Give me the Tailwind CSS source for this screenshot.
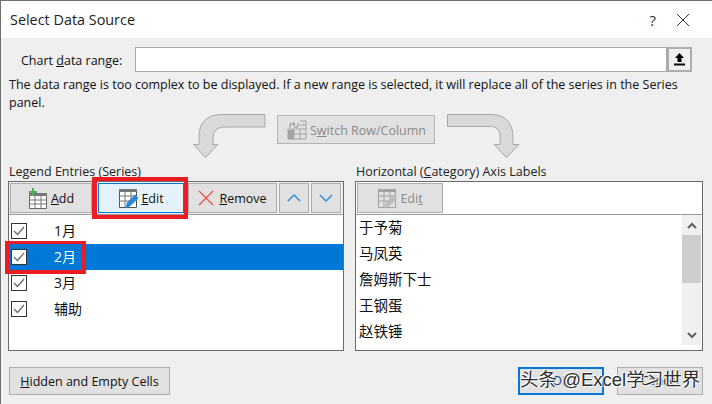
<!DOCTYPE html>
<html lang="en">
<head>
  <meta charset="UTF-8">
  <title>Select Data Source</title>
  <script src="https://cdn.jsdelivr.net/npm/@tailwindcss/browser@4"></script>
</head>
<body class="m-0 bg-[#efefef]">
  <div class="relative w-[712px] h-[404px] overflow-hidden bg-[#efefef] border-t border-l border-[#6e6e6e] text-[12.5px] leading-[18px] text-[#111] font-['Open_Sans','Noto_Sans_CJK_SC',sans-serif]">

    <!-- Title bar -->
    <div class="h-[37px] bg-white flex items-center pl-[9px] pr-[22px]">
      <span class="text-[14.4px] text-[#222]">Select Data Source</span>
      <span class="ml-auto text-[15px] text-[#333]">?</span>
      <svg class="ml-[20px] w-[14px] h-[14px]" viewBox="0 0 14 14" fill="none" stroke="#333" stroke-width="1"><path d="M1 1l12 12M13 1L1 13"/></svg>
    </div>

    <div class="pl-[7px] pr-[9px]">
      <!-- Data range -->
      <div class="flex items-center mt-[9px] h-[25px] pr-[11px]">
        <label class="w-[127px] pl-[13px] pt-[2px] shrink-0">Chart <u>d</u>ata range:</label>
        <div class="flex-1 h-full bg-white border border-[#a9a9a9]"></div>
        <div class="w-[25px] h-[25px] bg-[#f0f0f0] border-2 border-[#adadad] flex items-center justify-center">
          <svg class="w-[11px] h-[13px]" viewBox="0 0 11 13" fill="#000"><path d="M5.500 0L10 5H7.500v4h-4V5H1zM0 10.500h11V12.500H0z"/></svg>
        </div>
      </div>

      <p class="mt-[4px] pl-[1px] h-[38px] w-[690px]">The data range is too complex to be displayed. If a new range is selected, it will replace all of the series in the Series panel.</p>

      <!-- Switch row -->
      <div class="flex h-[49px]">
        <svg class="ml-[185px] w-[73px] h-[45px] shrink-0" viewBox="0 0 73 45" fill="#d9d9d9" stroke="#a8a8a8"><path d="M72 .5V13H32C24 13 20 17 20 25V30.500H25L12.500 43.500 .5 30.500H6V22C6 9 14 .5 28 .5Z"/></svg>
        <div class="ml-[11px] mt-[1px] w-[158px] h-[29px] bg-[#e1e1e1] border border-[#b5b5b5] text-[#8a8a8a] flex items-center pl-[9px] gap-[3px]">
          <svg class="w-[20px] h-[20px]" viewBox="0 0 20 20" fill="none"><path d="M1 9h18v10H1zM7 9v10M13 9v10M1 14h18M13 1h6v8M13 5h6" stroke="#a3a3a3"/><path d="M1 10h6v9H1z" fill="#a3a3a3"/><path d="M3 8V4h5M6 2l2 2-2 2M11 3v4H7" stroke="#8f8f8f"/></svg>
          <span class="pt-[2px]">S<u>w</u>itch Row/Column</span>
        </div>
        <svg class="ml-[12px] w-[73px] h-[45px] shrink-0" viewBox="0 0 73 45" fill="#d9d9d9" stroke="#a8a8a8"><path d="M.5 .5V12.500H42C49 12.500 53 15 53 22V30.500H47L59.500 43.500 72 30.500H66V24C66 8 58 .5 44 .5Z"/></svg>
      </div>

      <!-- Panels -->
      <div class="flex gap-[11px]">
        <section class="w-[336px]">
          <div class="h-[18px] pl-[1px] pt-[1px] leading-[16px] text-[#222]">Legend Entries (<u>S</u>eries)</div>
          <div class="h-[170px] bg-white border border-[#6b6b6b] flex flex-col">
            <div class="h-[33px] bg-[#efefef] border-b border-[#9a9a9a] flex items-start gap-[2px] pl-[1px] pt-[1px] shrink-0">
              <button class="w-[82px] h-[30px] bg-[#e1e1e1] border border-[#adadad] flex items-center justify-center gap-[3px]">
                <svg class="w-[20px] h-[21px]" viewBox="0 0 20 21" fill="none"><path d="M1.500 5.500h17v15h-17z" fill="#fff" stroke="#666"/><path d="M1 5h18v3H1z" fill="#777"/><path d="M7 8v12M13 8v12M1 12h18M1 16h18" stroke="#777"/><path d="M5 0v8M1 4h8" stroke="#4caf50" stroke-width="2"/></svg>
                <span class="pt-[2px]"><u>A</u>dd</span>
              </button>
              <button class="relative z-10 ml-[4px] w-[86px] h-[30px] bg-[#e5f1fb] border border-[#0078d7] flex items-center justify-center gap-[3px]">
                <svg class="w-[20px] h-[21px]" viewBox="0 0 20 21" fill="none"><path d="M1.500 1.500h17v18h-17z" fill="#fff" stroke="#555"/><path d="M1 1h18v3H1z" fill="#777"/><path d="M7 4v15M13 4v9M1 8h17M1 13h12" stroke="#777"/><path d="M7.500 20.500l1.500-6 8-8 3.500 3.500-8 8z" fill="#2b88d8"/></svg>
                <span class="pt-[2px]"><u>E</u>dit</span>
                <div class="absolute left-[-7px] top-[-7px] w-[96px] h-[42px] border-4 border-l-[5px] border-[#ed1c24]"></div>
              </button>
              <button class="ml-[2px] w-[89px] h-[30px] bg-[#e1e1e1] border border-[#adadad] flex items-center justify-center gap-[5px]">
                <svg class="w-[16px] h-[16px]" viewBox="0 0 16 16" fill="none" stroke="#e8504f" stroke-width="1.300"><path d="M1 1l14 14M15 1L1 15"/></svg>
                <span class="pt-[2px]"><u>R</u>emove</span>
              </button>
              <button class="w-[30px] h-[30px] bg-[#e1e1e1] border border-[#adadad] flex items-center justify-center">
                <svg class="w-[14px] h-[8px]" viewBox="0 0 14 8" fill="none" stroke="#3a8fd6" stroke-width="1.500"><path d="M1 7l6-6 6 6"/></svg>
              </button>
              <button class="w-[30px] h-[30px] bg-[#e1e1e1] border border-[#adadad] flex items-center justify-center">
                <svg class="w-[14px] h-[8px]" viewBox="0 0 14 8" fill="none" stroke="#3a8fd6" stroke-width="1.500"><path d="M1 1l6 6 6-6"/></svg>
              </button>
            </div>
            <ul class="pt-[3px] text-[14px]">
              <li class="h-[26px] flex items-center pl-[2px]">
                <span class="w-[16px] h-[16px] bg-white border border-[#333] flex items-center justify-center"><svg class="w-[12px] h-[10px]" viewBox="0 0 12 10" fill="none" stroke="#666" stroke-width="1.200"><path d="M1 5l3.500 3.500L11 1"/></svg></span>
                <span class="ml-[27px]">1月</span>
              </li>
              <li class="relative h-[26px] flex items-center pl-[2px] bg-[#0078d7] text-white">
                <span class="w-[16px] h-[16px] bg-white border border-[#333] flex items-center justify-center"><svg class="w-[12px] h-[10px]" viewBox="0 0 12 10" fill="none" stroke="#666" stroke-width="1.200"><path d="M1 5l3.500 3.500L11 1"/></svg></span>
                <span class="ml-[27px]">2月</span>
                <div class="absolute left-[-4px] top-[-3px] w-[81px] h-[33px] border-4 border-t-[3px] border-[#ed1c24]"></div>
              </li>
              <li class="h-[26px] flex items-center pl-[2px]">
                <span class="w-[16px] h-[16px] bg-white border border-[#333] flex items-center justify-center"><svg class="w-[12px] h-[10px]" viewBox="0 0 12 10" fill="none" stroke="#666" stroke-width="1.200"><path d="M1 5l3.500 3.500L11 1"/></svg></span>
                <span class="ml-[27px]">3月</span>
              </li>
              <li class="h-[26px] flex items-center pl-[2px]">
                <span class="w-[16px] h-[16px] bg-white border border-[#333] flex items-center justify-center"><svg class="w-[12px] h-[10px]" viewBox="0 0 12 10" fill="none" stroke="#666" stroke-width="1.200"><path d="M1 5l3.500 3.500L11 1"/></svg></span>
                <span class="ml-[27px]">辅助</span>
              </li>
            </ul>
          </div>
        </section>

        <section class="w-[348px]">
          <div class="h-[18px] pl-[1px] pt-[1px] leading-[16px] text-[#222]">Horizontal (<u>C</u>ategory) Axis Labels</div>
          <div class="h-[170px] bg-white border border-[#6b6b6b] flex flex-col">
            <div class="h-[33px] border-b border-[#9a9a9a] pl-[1px] pt-[1px] shrink-0">
              <button class="w-[86px] h-[30px] bg-[#e1e1e1] border border-[#adadad] text-[#8a8a8a] flex items-center justify-center gap-[3px]">
                <svg class="w-[20px] h-[21px]" viewBox="0 0 20 21" fill="none"><path d="M1.500 1.500h17v18h-17z" stroke="#a3a3a3"/><path d="M1 1h18v3H1z" fill="#a3a3a3"/><path d="M7 4v15M13 4v9M1 8h17M1 13h12" stroke="#a3a3a3"/><path d="M7.500 20.500l1.500-6 8-8 3.500 3.500-8 8z" fill="#bdbdbd"/></svg>
                <span class="pt-[2px]">Edi<u>t</u></span>
              </button>
            </div>
            <div class="flex flex-1 min-h-0">
              <ul class="flex-1 pl-[3px] text-[14.500px] text-[#111]">
                <li class="h-[26px] flex items-center">于予菊</li>
                <li class="h-[26px] flex items-center">马凤英</li>
                <li class="h-[26px] flex items-center">詹姆斯下士</li>
                <li class="h-[26px] flex items-center">王钢蛋</li>
                <li class="h-[26px] flex items-center">赵铁锤</li>
              </ul>
              <div class="w-[19px] h-[130px] mr-[1px] bg-[#f0f0f0] flex flex-col">
                <div class="h-[20px] flex items-center justify-center"><svg class="w-[10px] h-[7px]" viewBox="0 0 10 7" fill="none" stroke="#606060" stroke-width="2"><path d="M1 6l4-4 4 4"/></svg></div>
                <div class="h-[48px] bg-[#cdcdcd]"></div>
                <div class="mt-auto h-[20px] flex items-center justify-center"><svg class="w-[10px] h-[7px]" viewBox="0 0 10 7" fill="none" stroke="#606060" stroke-width="2"><path d="M1 1l4 4 4-4"/></svg></div>
              </div>
            </div>
          </div>
        </section>
      </div>

      <!-- Bottom buttons -->
      <div class="flex mt-[16px] pl-[1px]">
        <button class="w-[161px] h-[28px] bg-[#e1e1e1] border border-[#adadad] pt-[1px]"><u>H</u>idden and Empty Cells</button>
        <button class="ml-auto w-[86px] h-[28px] bg-[#e1e1e1] border-2 border-[#0078d7] text-[#1a3f8f]">OK</button>
        <button class="ml-[13px] w-[86px] h-[28px] bg-[#e1e1e1] border border-[#adadad]">Cancel</button>
      </div>
    </div>

    <!-- Watermark -->
    <div class="absolute left-[519px] top-[365px] h-[28px] leading-[28px] whitespace-nowrap text-[18.5px] text-[#2e2e2e] font-['Liberation_Sans','Noto_Sans_CJK_SC',sans-serif] [text-shadow:-1px_-1px_1px_#fff,1px_1px_1px_#fff,0_0_2px_#fff]">头条 @Excel学习世界</div>
  </div>
</body>
</html>
